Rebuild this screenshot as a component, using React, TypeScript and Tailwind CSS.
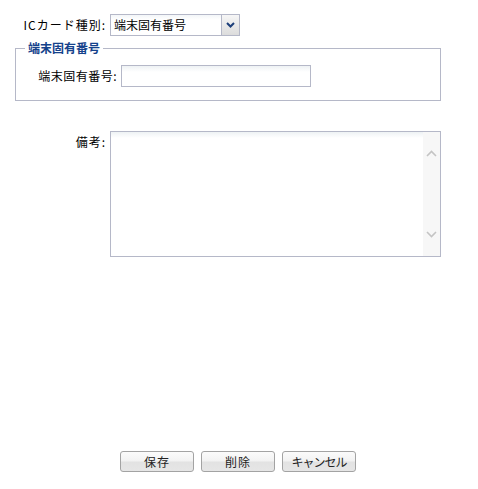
import React from "react";

const font = { fontFamily: '"Noto Sans CJK JP", "Liberation Sans", sans-serif' };

function Btn({ label, tight }: { label: string; tight?: boolean }) {
  return (
    <button
      className={
        "w-[74px] h-[21px] rounded-[3px] border border-[#a3a3a3] text-[12px] leading-[19px] text-[#222] bg-[linear-gradient(to_bottom,#fbfbfb_0%,#f2f2f2_48%,#e2e2e2_52%,#e6e6e6_100%)] " +
        (tight ? "tracking-[-1px]" : "tracking-[1px]")
      }
    >
      {label}
    </button>
  );
}

export default function App() {
  return (
    <div className="w-[478px] h-[489px] bg-white text-black text-[12px] leading-[14px] flex flex-col" style={font}>
      {/* IC card type row */}
      <div className="flex items-center pt-[14px]">
        <div className="w-[106px] text-right tracking-[1px]">ICカード種別:</div>
        <div className="ml-[4px] w-[130px] h-[22px] flex border border-[#b5b8c8]">
          <div className="flex-1 pl-[3px] leading-[20px] bg-[linear-gradient(to_bottom,#f3f6f8_0px,#ffffff_5px)]">端末固有番号</div>
          <div className="w-[18px] border-l border-[#b5b8c8] flex items-center justify-center bg-[linear-gradient(to_bottom,#f6f6f6,#dcdcdc)]">
            <svg width="9" height="6" viewBox="0 0 9 6">
              <path d="M1 1 L4.5 4.5 L8 1" stroke="#1d3f7a" strokeWidth="2" fill="none" />
            </svg>
          </div>
        </div>
      </div>

      {/* Fieldset */}
      <fieldset className="ml-[15px] mt-[5px] w-[426px] border border-[#b5b8c8] pt-[10px] pb-[13px]">
        <legend className="ml-[9px] px-[3px] font-bold text-[#15428b] leading-[14px]">端末固有番号</legend>
        <div className="flex items-center">
          <div className="w-[101px] text-right tracking-[0.5px]">端末固有番号:</div>
          <div className="ml-[4px] w-[190px] h-[22px] border border-[#b5b8c8] bg-[linear-gradient(to_bottom,#eef2f4_0px,#ffffff_6px)]" />
        </div>
      </fieldset>

      {/* Remarks */}
      <div className="flex mt-[30px]">
        <div className="w-[106px] text-right pt-[4px] tracking-[1px]">備考:</div>
        <div className="ml-[4px] w-[331px] h-[126px] border border-[#b5b8c8] flex">
          <div className="flex-1 bg-[linear-gradient(to_bottom,#eef2f4_0px,#ffffff_6px)]" />
          <div className="w-[17px] bg-[#f7f7f7] flex flex-col items-center justify-between pt-[18px] pb-[18px]">
            <svg width="11" height="7" viewBox="0 0 11 7">
              <path d="M1 6 L5.5 1.5 L10 6" stroke="#c4c4c4" strokeWidth="1.6" fill="none" />
            </svg>
            <svg width="11" height="7" viewBox="0 0 11 7">
              <path d="M1 1 L5.5 5.5 L10 1" stroke="#c4c4c4" strokeWidth="1.6" fill="none" />
            </svg>
          </div>
        </div>
      </div>

      {/* Buttons */}
      <div className="flex justify-center gap-[7px] mt-[194px] pr-[2px]">
        <Btn label="保存" />
        <Btn label="削除" />
        <Btn label="キャンセル" tight />
      </div>
    </div>
  );
}
